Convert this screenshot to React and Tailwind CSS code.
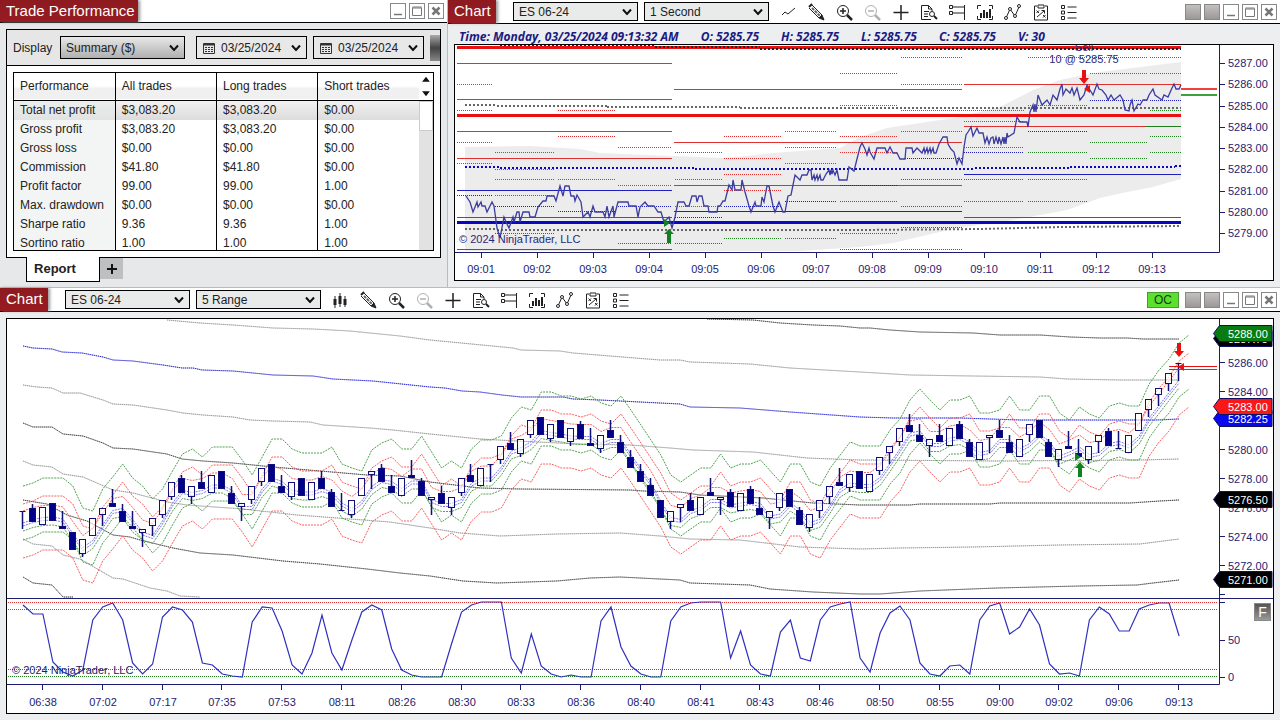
import React from 'react';

const icons = {
  line: <path d="M3 13 6 10 9 12 16 6" />,
  bars: (
    <>
      <path d="M4 6v12M9 3v14M14 6v11" />
      <path strokeWidth="3" d="M4 9v6M9 6v8M14 9v6" />
    </>
  ),
  pencil: (
    <>
      <path d="M5 3 15 13M2 6 12 16" />
      <path strokeWidth="2" stroke="#666" strokeDasharray="3 1" d="M5 6 13 14" />
      <path fill="#222" d="M15 13 17 18 12 16z" />
      <path strokeWidth="2" d="M2 5 5 2" />
    </>
  ),
  zoomIn: (
    <>
      <circle cx="8" cy="9" r="5.5" />
      <path strokeWidth="1.5" d="M8 6v6M5 9h6" />
      <path strokeWidth="2.5" d="M12 13 17 18" />
    </>
  ),
  zoomOut: (
    <g stroke="#b0b0b0">
      <circle cx="8" cy="9" r="5.5" />
      <path strokeWidth="1.5" d="M5 9h6" />
      <path strokeWidth="2.5" d="M12 13 17 18" />
    </g>
  ),
  cross: <path strokeWidth="1.5" d="M10 3v15M2.5 10.5h15" />,
  search: (
    <>
      <path d="M12 17.5H2.5v-14h7l3.5 3.5v2M9.5 3.5V7H13M5 9.5h5M5 12h4M5 14.5h4" />
      <circle cx="13" cy="12" r="2.5" />
      <path strokeWidth="2" d="M15 14 18 17" />
    </>
  ),
  order: <path d="M2.5 3.5h3v3h-3zM6 5h11M2.5 9.5h3v3h-3zM6 11h11M17.5 3v15" />,
  frame: (
    <>
      <path d="M6 3.5H2.5V7M14 3.5h3.500V7M6 17.5H2.5V14M14 17.5h3.500V14" />
      <path strokeWidth="2" d="M6 11v5M9 8v8M12 10v6M15 7v9" />
    </>
  ),
  indicator: (
    <>
      <path d="M3.5 15 7 7 12 14 16 5" />
      <circle cx="3" cy="16" r="1.5" fill="#fff" />
      <circle cx="7" cy="7" r="1.5" fill="#fff" />
      <circle cx="12" cy="14" r="1.5" fill="#fff" />
      <circle cx="16" cy="4" r="1.5" fill="#fff" />
    </>
  ),
  strategy: (
    <>
      <path d="M6 4H3.5v14h13V4H14M7 3h6v3H7z" />
      <path d="M5.5 8.5 8 11M8 8.5 5.5 11M12 13 14.5 15.5M14.5 13 12 15.5M6 15 13 9M10.5 8.5H13.5V11.5" />
    </>
  ),
  list: <path d="M2.5 3.5h3v3h-3zM2.5 9h3v3h-3zM2.5 14.5h3v3h-3zM8.5 5h9M8.5 10.5h9M8.5 16h9" />,
};

const tools = ['pencil', 'zoomIn', 'zoomOut', 'cross', 'search', 'order', 'frame', 'indicator', 'strategy', 'list'];

function ToolBar({ first }) {
  return (
    <div className="ml-1.5 flex">
      {[first, ...tools].map((name) => (
        <button key={name} type="button" aria-label={name} className="flex h-5 w-7 items-center justify-center">
          <svg viewBox="0 0 20 20" className="h-5 w-5" fill="none" stroke="#222" strokeWidth="1">
            {icons[name]}
          </svg>
        </button>
      ))}
    </div>
  );
}

function Select({ label, value, className, icon }) {
  return (
    <div className={`relative border border-black ${className}`}>
      {icon && (
        <svg viewBox="0 0 12 12" className="absolute left-1.5 top-1/2 h-3 w-3 -translate-y-1/2" fill="none" stroke="#333">
          <path d="M.5 1.5h11v10H.5z" />
          <path strokeWidth="2" d="M1 2.5h10" />
          <path strokeDasharray="2 1" d="M2 5.5h9M2 7.5h9M2 9.5h9" />
        </svg>
      )}
      <select
        aria-label={label}
        defaultValue={value}
        className={`block h-full w-full appearance-none bg-transparent text-[12px] leading-4 text-[#222] outline-none ${icon ? 'pl-6' : 'pl-[5px]'}`}
      >
        <option>{value}</option>
      </select>
      <svg viewBox="0 0 10 7" className="pointer-events-none absolute right-[5px] top-1/2 h-[7px] w-[10px] -translate-y-1/2" fill="none" stroke="#111" strokeWidth="2">
        <path d="M1 1 5 5.500 9 1" />
      </svg>
    </div>
  );
}

function WindowButtons({ links }) {
  const shapes = [
    { label: 'Minimize', d: <path strokeWidth="1.5" d="M3 10.5h8" /> },
    { label: 'Maximize', d: <path d="M2.5 3h9M2.5 4h9M2.5 3.5v8h9v-8" /> },
    { label: 'Close', d: <path strokeWidth="2.5" d="M3.5 3.5l7 7M10.5 3.5l-7 7" /> },
  ];
  return (
    <div className="flex gap-[3px] pr-[3px]">
      {links && (
        <>
          <button type="button" aria-label="Instrument link" className="h-4 w-4 border border-[#888] bg-linear-to-b from-[#c4c0c0] to-[#9c9898]" />
          <button type="button" aria-label="Interval link" className="h-4 w-4 border border-[#888] bg-linear-to-b from-[#c4c0c0] to-[#9c9898]" />
        </>
      )}
      {shapes.map((s) => (
        <button key={s.label} type="button" aria-label={s.label} className="h-4 w-4 border border-[#888] bg-white">
          <svg viewBox="0 0 14 14" className="h-3.5 w-3.5" fill="none" stroke="#777">
            {s.d}
          </svg>
        </button>
      ))}
    </div>
  );
}

function TitleTab({ children }) {
  return (
    <h2 className="flex h-full min-w-12 items-center bg-linear-to-b from-[#8c1a1f] to-[#981c22] pl-1.5 pr-[3px] text-[15px] text-white shadow-[2px_0_3px_#999]">
      {children}
    </h2>
  );
}

const performance = [
  ['Total net profit', '$3,083.20', '$3,083.20', '$0.00'],
  ['Gross profit', '$3,083.20', '$3,083.20', '$0.00'],
  ['Gross loss', '$0.00', '$0.00', '$0.00'],
  ['Commission', '$41.80', '$41.80', '$0.00'],
  ['Profit factor', '99.00', '99.00', '1.00'],
  ['Max. drawdown', '$0.00', '$0.00', '$0.00'],
  ['Sharpe ratio', '9.36', '9.36', '1.00'],
  ['Sortino ratio', '1.00', '1.00', '1.00'],
];

function TradePerformance() {
  return (
    <section className="flex w-[35%] flex-col border-r border-[#bbb] bg-[#e6e8e9]">
      <header className="flex h-[23px] items-center justify-between border-b border-black bg-white">
        <TitleTab>Trade Performance</TitleTab>
        <WindowButtons />
      </header>
      <div className="ml-1.5 mr-1.5 mt-1.5 border border-black bg-white">
        <div className="flex h-9 items-center overflow-hidden border-b border-black bg-[#e6e6e6] pl-1.5 text-[12px] text-[#222]">
          <span className="w-[47px] shrink-0">Display</span>
          <Select label="Display" value="Summary ($)" className="h-[23px] w-[125px] shrink-0 bg-linear-to-b from-[#e8e8e8] to-[#b0b0b0]" />
          <Select label="From" value="03/25/2024" icon className="ml-[11px] h-[23px] w-[111px] shrink-0 bg-[#e8e8e8]" />
          <Select label="To" value="03/25/2024" icon className="ml-1.5 h-[23px] w-[111px] shrink-0 bg-[#e8e8e8]" />
          <button type="button" aria-label="Generate" className="ml-1.5 h-[26px] grow bg-linear-to-b from-[#aaa] via-[#444] to-[#888]" />
        </div>
        <div className="m-1.5 flex h-[179px] overflow-hidden border border-black">
          <div className="min-w-0 grow">
            <table className="w-full table-fixed border-collapse text-left text-[12px] text-[#222]">
              <thead>
                <tr className="h-[27px] border-b border-black bg-linear-to-b from-white from-50% to-[#f0f0f0] to-60%">
                  {['Performance', 'All trades', 'Long trades', 'Short trades'].map((h) => (
                    <th key={h} className="w-1/4 border-r border-black pl-1.5 font-normal last:border-r-0">{h}</th>
                  ))}
                </tr>
              </thead>
              <tbody>
                {performance.map((row) => (
                  <tr key={row[0]} className="h-[19px] leading-[19px] first:bg-linear-to-b first:from-[#f2f2f2] first:to-[#dcdcdc]">
                    {row.map((cell, i) => (
                      <td key={i} className="whitespace-nowrap border-r border-black pl-1.5 first:bg-[#e8eceb]/50 last:border-r-0">{cell}</td>
                    ))}
                  </tr>
                ))}
              </tbody>
            </table>
          </div>
          <div className="flex w-3.5 shrink-0 flex-col bg-[#e2e2e2]">
            <svg viewBox="0 0 14 28" className="h-7 w-3.5 shrink-0 border-b border-black bg-white" fill="#111">
              <path d="M3 9 7 4 11 9zM3 19 7 24 11 19z" />
            </svg>
            <div className="h-[30px] border border-[#ccc] bg-white" />
          </div>
        </div>
      </div>
      <div className="flex h-[29px] items-start pl-[26px]">
        <button type="button" className="-mt-px h-[25px] w-[74px] border border-t-0 border-black bg-white pr-4 text-[13px] font-bold text-[#222]">
          Report
        </button>
        <button type="button" aria-label="New tab" className="flex h-[21px] w-[23px] items-center justify-center bg-[#bdbfc0]">
          <svg viewBox="0 0 12 12" className="h-3 w-3" stroke="#111" strokeWidth="2">
            <path d="M6 1v10M1 6h10" />
          </svg>
        </button>
      </div>
    </section>
  );
}

// x1, x2, y
const levels = [
  { stroke: '#e03030', segs: [[457, 672, 63], [457, 672, 99], [457, 672, 131], [457, 672, 158], [674, 962, 89], [674, 962, 142], [674, 962, 185], [964, 1181, 84], [964, 1145, 126]] },
  { stroke: '#2020c0', segs: [[457, 672, 190], [674, 962, 211], [964, 1181, 174]] },
  { stroke: '#208020', segs: [[457, 672, 217], [964, 1181, 217], [457, 672, 249], [1145, 1181, 126]] },
];

const dottedLevels = [
  {
    stroke: '#e03030',
    segs: [
      [457, 493, 84], [457, 493, 110], [457, 493, 142], [457, 493, 163], [495, 555, 152], [495, 555, 169], [495, 555, 179], [495, 555, 195],
      [558, 615, 110], [558, 615, 136], [558, 615, 179], [618, 672, 147], [618, 672, 185], [675, 722, 152], [675, 722, 179], [675, 722, 206],
      [724, 782, 136], [724, 782, 158], [724, 782, 174], [724, 782, 190], [785, 837, 131], [785, 837, 147], [785, 837, 163],
      [840, 897, 73], [840, 897, 105], [840, 897, 136], [840, 897, 152], [901, 962, 57], [901, 962, 84], [901, 1024, 110], [901, 962, 131],
      [964, 1024, 121], [964, 1024, 147], [1028, 1087, 57], [1028, 1087, 105], [1090, 1147, 57], [1090, 1147, 73], [1150, 1181, 57], [1150, 1181, 73],
    ],
  },
  {
    stroke: '#2020c0',
    segs: [
      [457, 493, 195], [495, 555, 206], [558, 615, 211], [618, 672, 206], [675, 722, 217], [724, 782, 206], [785, 837, 201], [905, 962, 158],
      [964, 1024, 152], [1028, 1087, 131], [1090, 1147, 100], [1150, 1181, 100], [840, 897, 185],
    ],
  },
  {
    stroke: '#208020',
    segs: [
      [495, 555, 233], [618, 672, 243], [675, 722, 243], [724, 782, 238], [785, 837, 238], [840, 897, 201], [840, 897, 233], [840, 897, 249],
      [901, 962, 179], [901, 962, 206], [901, 962, 227], [901, 962, 249], [964, 1024, 179], [964, 1024, 201], [1028, 1087, 152], [1028, 1087, 179],
      [1028, 1087, 201], [1090, 1147, 142], [1090, 1147, 158], [1150, 1181, 110], [1150, 1181, 136], [1150, 1181, 152],
    ],
  },
];

const segPath = (segs) => segs.map(([a, b, y]) => `M${a} ${y + 0.5}H${b}`).join('');

const seconds =
  '466,196 470,202 473,212 477,202 478,207 481,202 482,206 485,206 487,212 492,202 494,206 497,228 500,238 504,217 506,222 509,228 513,217 514,222 517,212 519,212 520,222 523,212 529,212 530,217 535,217 538,207 543,201 546,201 547,196 554,196 556,201 560,186 563,196 565,186 569,186 571,196 574,196 575,201 577,195 581,202 583,217 588,212 590,217 593,206 595,212 603,212 605,217 607,206 609,217 613,206 614,217 618,202 628,202 629,206 636,206 638,217 640,207 645,202 648,206 654,206 658,212 661,212 664,222 669,217 672,228 675,217 678,202 684,202 686,206 689,206 692,196 696,196 697,202 699,196 702,196 704,206 708,206 709,212 717,212 718,206 720,206 723,201 725,201 729,185 732,190 733,180 735,190 741,190 742,180 745,192 749,206 751,212 755,202 756,206 761,206 762,197 764,202 767,186 769,186 773,206 775,212 779,202 781,207 783,212 785,212 788,196 791,195 795,175 800,180 802,175 807,175 809,170 811,170 812,180 814,175 815,180 817,175 818,180 820,175 821,180 823,180 826,174 829,170 830,175 831,170 832,174 833,170 835,175 837,170 839,180 847,180 849,167 854,171 860,147 862,143 865,149 867,155 869,148 870,152 874,159 877,148 885,148 887,153 890,147 893,153 897,153 900,159 905,159 906,148 912,148 913,153 917,148 922,153 924,148 925,153 927,148 928,153 930,148 931,153 933,148 934,153 936,153 939,144 943,137 947,137 948,144 951,149 954,152 957,164 959,158 962,164 964,147 966,135 968,132 971,127 973,136 977,128 979,133 983,133 985,143 987,137 989,144 991,138 993,137 994,144 996,137 998,144 999,137 1001,144 1003,137 1004,144 1005,137 1006,144 1007,133 1008,137 1014,133 1017,117 1020,122 1027,122 1028,127 1030,112 1033,105 1034,112 1035,104 1036,112 1038,95 1042,105 1047,100 1050,105 1053,95 1057,100 1060,89 1062,84 1063,95 1066,89 1070,93 1072,88 1074,95 1077,88 1080,100 1084,95 1087,85 1090,90 1093,95 1097,84 1099,89 1102,90 1106,95 1108,100 1111,95 1114,100 1120,95 1123,100 1125,110 1129,111 1130,105 1132,100 1134,111 1138,104 1140,105 1143,100 1147,100 1149,95 1153,89 1155,95 1162,100 1164,95 1168,97 1172,88 1174,84 1176,89 1179,89 1181,85';

const topTimes = ['09:01', '09:02', '09:03', '09:04', '09:05', '09:06', '09:07', '09:08', '09:09', '09:10', '09:11', '09:12', '09:13'];

function SecondChart() {
  return (
    <svg viewBox="455 45 818 235" className="block w-full bg-white text-[11px]" fill="none">
      <path
        fill="#ececec"
        d="M465 147 530 146 580 149 600 153 673 156 726 158 773 153 840 148 860 137 887 128 960 117 1000 107 1033 90 1060 80 1100 72 1181 62V179L1153 187 1127 192 1100 198 1067 210 1013 220 957 228 927 235 893 243 860 247 800 251H465z"
      />
      <path stroke="#e81010" strokeWidth="3" d="M457 47.5H1181M457 115.5H1181" />
      <path stroke="#0808c0" strokeWidth="3" d="M457 222.5H1181" />
      {levels.map((l) => (
        <path key={l.stroke} stroke={l.stroke} d={segPath(l.segs)} />
      ))}
      {dottedLevels.map((l) => (
        <path key={l.stroke} stroke={l.stroke} strokeDasharray="1 1" d={segPath(l.segs)} />
      ))}
      <g strokeWidth="2" strokeDasharray="2 2">
        <path stroke="#222" d="M500 45H655M655 47H760M760 49H1181" />
        <path stroke="#666" d="M465 105H497M497 106H607M607 107H740M740 108H1181M465 229H497M497 230H860L980 229 1060 227 1181 226" />
        <path stroke="#0808c0" d="M465 167H500M500 168H695M695 169H975M975 168H1070M1070 167H1175M1175 166H1181" />
      </g>
      <polyline stroke="#3c3ca0" strokeWidth="1.3" points={seconds} />
      <path stroke="#f04040" strokeWidth="2" d="M1181 89H1217" />
      <path stroke="#40a040" strokeWidth="2" d="M1181 95H1217" />
      <path fill="#e81010" d="M1082 70h4v8h3l-5 6-5-6h3zM1084 89l6-4v8z" />
      <path fill="#108020" d="M667 243h4v-9h3l-5-5-5 5h3zM664 219l6 4-6 4z" />
      <g fill="#28287c">
        <text x="459" y="243">© 2024 NinjaTrader, LLC</text>
        <g textAnchor="middle">
          <text x="1084" y="51">Sell</text>
          <text x="1084" y="63">10 @ 5285.75</text>
        </g>
      </g>
      <path stroke="#1c1c70" d="M455 252.5H1219.5V45" />
      <g fill="#1c1c70" stroke="none">
        {topTimes.map((t, i) => {
          const x = Math.round(481 + i * 55.9);
          return (
            <g key={t}>
              <path stroke="#1c1c70" d={`M${x + 0.5} 253v5`} />
              <text x={x} y="273" textAnchor="middle">{t}</text>
            </g>
          );
        })}
        {[5287, 5286, 5285, 5284, 5283, 5282, 5281, 5280, 5279].map((p, i) => {
          const y = Math.round(63 + i * 21.25);
          return (
            <g key={p}>
              <path stroke="#1c1c70" d={`M1220 ${y + 0.5}h5`} />
              <text x="1228" y={y + 4}>{p}.00</text>
            </g>
          );
        })}
      </g>
    </svg>
  );
}

// high y, body length (negative when the bar closes down); every bar spans 18px
const bars = [
  [511, 1], [504, -14], [507, 18], [503, -18], [511, -3], [532, -18], [539, 15], [518, 18], [508, 7], [489, -4],
  [504, -11], [511, -3], [529, 4], [518, 8], [500, 15], [482, 15], [475, -15], [486, 11], [471, -7], [475, 18],
  [471, -18], [486, -11], [503, 4], [486, 14], [468, 14], [464, -18], [475, -7], [482, 15], [478, -18], [482, 18],
  [471, -11], [489, -15], [493, -1], [500, 15], [478, 18], [471, 4], [464, -14], [475, -7], [478, 18], [460, -3],
  [478, -15], [497, 3], [486, -11], [497, 11], [478, 15], [464, -7], [468, 18], [464, 1], [446, 14], [432, -7],
  [439, 15], [420, 15], [417, -18], [424, 15], [420, -18], [428, 14], [421, -15], [428, -3], [435, 14], [420, -8],
  [435, -11], [450, -11], [464, -11], [478, -11], [500, -18], [511, 11], [504, 4], [493, -11], [497, 18], [478, -4],
  [497, 3], [489, -15], [493, 18], [486, -15], [497, -7], [511, 7], [493, 15], [489, -18], [507, -15], [514, 14],
  [500, 11], [486, 11], [468, -4], [474, 14], [471, -18], [474, 18], [457, 14], [446, 7], [428, 14], [414, -7],
  [424, -7], [439, 7], [424, -7], [428, 18], [421, -15], [439, -15], [442, 18], [435, 3], [420, -8], [435, -11],
  [439, 18], [424, 11], [420, -18], [439, -15], [449, 11], [431, -3], [439, -4], [446, 14], [435, 7], [428, -15],
  [431, -1], [435, 18], [413, 18], [399, 11], [388, 7], [373, 11], [363, 1],
];

const upper = [
  486, 483, 478, 478, 478, 486, 508, 511, 489, 477, 464, 478, 486, 499, 489, 471, 454, 449, 457, 447, 447, 447, 460, 475, 457, 439, 439, 449,
  453, 453, 453, 447, 464, 468, 471, 450, 443, 439, 449, 449, 436, 452, 468, 461, 468, 449, 440, 440, 436, 418, 407, 410, 392, 392, 396, 396,
  399, 396, 403, 406, 396, 410, 425, 440, 455, 475, 482, 475, 468, 468, 454, 468, 464, 464, 460, 471, 482, 464, 464, 482, 486, 468, 455, 442,
  446, 446, 446, 430, 419, 400, 389, 400, 410, 400, 400, 396, 413, 413, 410, 396, 410, 410, 396, 396, 413, 420, 407, 414, 418, 406, 403, 406,
  406, 384, 370, 359, 343, 335,
];

const stochastic = [
  605, 614, 614, 662, 672, 676, 670, 620, 607, 603, 620, 663, 674, 664, 617, 607, 610, 622, 663, 665, 674, 676, 677, 622, 607, 608, 631, 665,
  674, 653, 615, 653, 670, 640, 612, 605, 610, 649, 670, 675, 677, 677, 677, 644, 612, 605, 602, 602, 602, 658, 673, 634, 666, 674, 677, 675,
  677, 677, 621, 607, 647, 666, 674, 677, 677, 621, 607, 603, 602, 602, 602, 658, 631, 665, 674, 676, 632, 620, 658, 661, 620, 607, 604, 602,
  658, 672, 633, 613, 606, 620, 663, 674, 676, 666, 665, 674, 620, 606, 603, 634, 627, 609, 625, 664, 674, 673, 676, 620, 607, 614, 631, 631,
  609, 605, 603, 603, 636,
];

const vwapBands = [
  { stroke: '#2828d0', d: 'M23 346 33 348 52 349 62 352 82 353 103 357 113 360 133 361 163 365 182 368 193 368 202 370 233 371 273 375 313 376 333 379 373 381 430 387 445 388 462 391 480 392 502 395 521 397 563 397 573 399 600 400 640 402 680 404 690 407 740 408 790 412 860 417 893 418 960 418 1020 420 1157 420 1179 419' },
  { stroke: '#999', d: 'M167 320 200 323 233 325 273 328 313 329 350 331 400 336 430 340 513 348 521 350 560 351 573 353 610 356 660 360 680 360 690 362 750 364 790 368 860 372 910 375 973 376 1040 377 1067 379 1120 380 1179 380' },
  { stroke: '#444', d: 'M707 319 753 320 780 323 813 325 840 326 860 328 870 328 890 330 920 332 973 333 1000 335 1040 335 1070 337 1100 338 1127 338 1143 339 1179 339' },
  { stroke: '#999', d: 'M23 385 37 387 52 388 63 393 80 393 103 400 113 404 133 405 167 410 183 413 203 415 233 417 250 420 273 421 310 422 323 425 370 428 393 430 430 434 480 439 517 441 580 444 630 445 670 448 693 450 753 452 807 458 860 460 1000 461 1140 460 1179 459' },
  { stroke: '#444', d: 'M23 423 33 427 52 427 63 434 83 436 103 443 113 448 133 449 167 454 182 459 203 461 233 463 273 467 320 471 367 475 400 476 430 482 480 488 520 489 630 490 643 491 680 492 700 495 763 498 813 503 860 505 910 505 920 504 990 504 1000 503 1130 503 1160 501 1179 500' },
  { stroke: '#999', d: 'M23 461 33 465 52 467 63 474 83 477 113 490 133 493 167 502 187 505 243 509 297 515 350 519 390 522 430 528 460 533 500 536 557 534 620 533 660 536 690 539 740 540 800 547 860 549 900 548 973 547 1060 545 1140 544 1179 539' },
  { stroke: '#444', d: 'M23 500 47 504 67 515 87 521 113 535 130 537 140 540 173 548 200 553 233 555 283 561 320 564 367 569 400 573 430 576 463 581 497 583 557 581 590 578 620 577 680 580 690 583 750 585 770 589 813 592 860 594 880 594 920 591 997 588 1080 586 1137 585 1153 583 1179 580' },
  { stroke: '#999', d: 'M23 539 33 544 52 546 63 555 80 559 113 578 123 579 150 588 167 591 180 596 200 597' },
  { stroke: '#444', d: 'M23 577 33 583 52 585 63 597 73 597' },
];

const badges = [
  { y: 338, fill: '#000', text: '5287.75' },
  { y: 333, fill: '#087c10', text: '5288.00' },
  { y: 418, fill: '#0808f0', text: '5282.25' },
  { y: 406, fill: '#f81818', text: '5283.00' },
  { y: 499, fill: '#000', text: '5276.50' },
  { y: 579, fill: '#000', text: '5271.00' },
];

const bottomTimes = ['06:38', '07:02', '07:17', '07:35', '07:53', '08:11', '08:26', '08:30', '08:33', '08:36', '08:40', '08:41', '08:43', '08:46', '08:50', '08:55', '09:00', '09:02', '09:06', '09:13'];

const barX = (i) => 23 + i * 9.966;
const series = (ys, shift = 0) => ys.map((y, i) => `${barX(i).toFixed(1)},${y + shift}`).join(' ');
const smooth = bars.map(([y], i) => (y + bars[Math.max(0, i - 1)][0]) / 2);

function RangeChart() {
  return (
    <svg viewBox="7 319 1266 394" className="block w-full bg-white text-[11px]" fill="none">
      {vwapBands.map((b) => (
        <g key={b.d} stroke={b.stroke}>
          <path strokeOpacity="0.4" d={b.d} />
          <path strokeDasharray="1 1" d={b.d} />
        </g>
      ))}
      <g strokeDasharray="2 1">
        <g stroke="#50a050">
          <polyline points={series(upper)} />
          <polyline points={series(upper, 54)} />
          <polyline points={series(smooth, 20)} />
        </g>
        <g stroke="#f86060">
          <polyline points={series(upper, 18)} />
          <polyline points={series(upper, 72)} />
          <polyline points={series(smooth)} />
        </g>
        <g stroke="#7878e8">
          <polyline points={series(smooth, 12)} />
          <polyline points={series(smooth, 15)} />
        </g>
      </g>
      {bars.map(([high, body], i) => {
        const x = Math.round(barX(i)) - 0.5;
        const down = body < 0;
        const size = Math.abs(body);
        const top = down ? high + 18 - size : high;
        return (
          <g key={i} stroke="#101078">
            <path strokeWidth="1.5" d={down ? `M${x} ${high}V${top}` : `M${x} ${high + size}V${high + 18}`} />
            {size === 1 ? (
              <path d={`M${x - 3} ${top + 0.5}h6`} />
            ) : (
              <rect x={x - 3} y={top + 0.5} width="6" height={size - 1} fill={down ? '#00008b' : '#fff'} fillOpacity={down ? 1 : 0.6} />
            )}
          </g>
        );
      })}
      <path stroke="#e81010" d="M1169 366.5H1217" />
      <path stroke="#507010" d="M1169 369.5H1217" />
      <path fill="#e81010" d="M1177 343h4v8h3l-5 6-5-6h3zM1178 367l6-4v8z" />
      <path fill="#108020" d="M1078 477h4v-9h3l-5-6-5 6h3zM1075 453l6 4-6 4z" />

      <path stroke="#e03030" strokeDasharray="1 1" d="M8 602.5H1218M8 609.5H1218" />
      <path stroke="#208020" strokeDasharray="1 1" d="M8 669.5H1218M8 676.5H1218" />
      <polyline stroke="#3030c0" strokeWidth="1.2" points={series(stochastic)} />
      <path stroke="#1c1c70" d="M7 598.5H1273M7 684.5H1219.5V319" />
      <g fill="#1c1c70">
        <text x="12" y="674">© 2024 NinjaTrader, LLC</text>
        {bottomTimes.map((t, i) => {
          const x = Math.round(barX(2 + i * 6));
          return (
            <g key={t}>
              <path stroke="#1c1c70" d={`M${x - 0.5} 685v5`} />
              <text x={x} y="706" textAnchor="middle">{t}</text>
            </g>
          );
        })}
        {[5286, 5284, 5282, 5280, 5278, 5276, 5274, 5272].map((p, i) => (
          <g key={p}>
            <path stroke="#1c1c70" d={`M1220 ${362 + i * 29 + 0.5}h5`} />
            <text x="1228" y={367 + i * 29}>{p}.00</text>
          </g>
        ))}
        <path stroke="#1c1c70" d="M1220 594.5h5M1220 602.5h5M1220 640.5h5M1220 677.5h5" />
        <text x="1228" y="644">50</text>
        <text x="1228" y="681">0</text>
      </g>
      {badges.map((b) => (
        <g key={b.text}>
          <path fill={b.fill} stroke="#101060" d={`M1213.5 ${b.y + 0.5}l6-8h52.5v16h-52.5z`} />
          <text x="1228" y={b.y + 5} fill="#fff">{b.text}</text>
        </g>
      ))}
    </svg>
  );
}

function SecondWindow() {
  return (
    <section className="flex flex-1 flex-col bg-[#eceef0]">
      <header className="flex h-6 items-center border-b border-black bg-white">
        <TitleTab>Chart</TitleTab>
        <Select label="Instrument" value="ES 06-24" className="ml-[17px] h-[19px] w-[125px] bg-[#e9ebeb]" />
        <Select label="Interval" value="1 Second" className="ml-1.5 h-[19px] w-[125px] bg-[#e9ebeb]" />
        <ToolBar first="line" />
        <div className="ml-auto">
          <WindowButtons links />
        </div>
      </header>
      <p className="flex h-5 items-center gap-[22px] pl-[11px] pt-1.5 font-['Open_Sans','Noto_Sans',sans-serif] text-[12px] font-bold italic text-[#1a1a80]">
        <span>Time: Monday, 03/25/2024 09:13:32 AM</span>
        <span>O: 5285.75</span>
        <span>H: 5285.75</span>
        <span>L: 5285.75</span>
        <span>C: 5285.75</span>
        <span>V: 30</span>
      </p>
      <div className="ml-1.5 mr-1.5 border border-black">
        <SecondChart />
      </div>
    </section>
  );
}

function RangeWindow() {
  return (
    <section className="border-t border-[#bbb] bg-[#eceef0] pb-1.5">
      <header className="flex h-6 items-center border-b border-black bg-white">
        <TitleTab>Chart</TitleTab>
        <Select label="Instrument" value="ES 06-24" className="ml-[17px] h-[19px] w-[125px] bg-[#e9ebeb]" />
        <Select label="Interval" value="5 Range" className="ml-1.5 h-[19px] w-[125px] bg-[#e9ebeb]" />
        <ToolBar first="bars" />
        <div className="ml-auto flex items-center gap-1.5">
          <button type="button" className="h-4 w-8 border border-[#4a9a30] bg-[#5be030] text-[12px] leading-[14px] text-[#143c10]">OC</button>
          <WindowButtons links />
        </div>
      </header>
      <div className="relative mx-1.5 mt-1.5 border border-black">
        <RangeChart />
        <button type="button" className="absolute right-0.5 top-[72%] h-[18px] w-[17px] border border-[#888] bg-linear-to-b from-[#555] to-[#999] text-[14px] leading-4 text-white">
          F
        </button>
      </div>
    </section>
  );
}

export default function App() {
  return (
    <main className="min-h-screen bg-[#e6e8e9] font-['Liberation_Sans',Arial,sans-serif]">
      <div className="flex">
        <TradePerformance />
        <SecondWindow />
      </div>
      <RangeWindow />
    </main>
  );
}
